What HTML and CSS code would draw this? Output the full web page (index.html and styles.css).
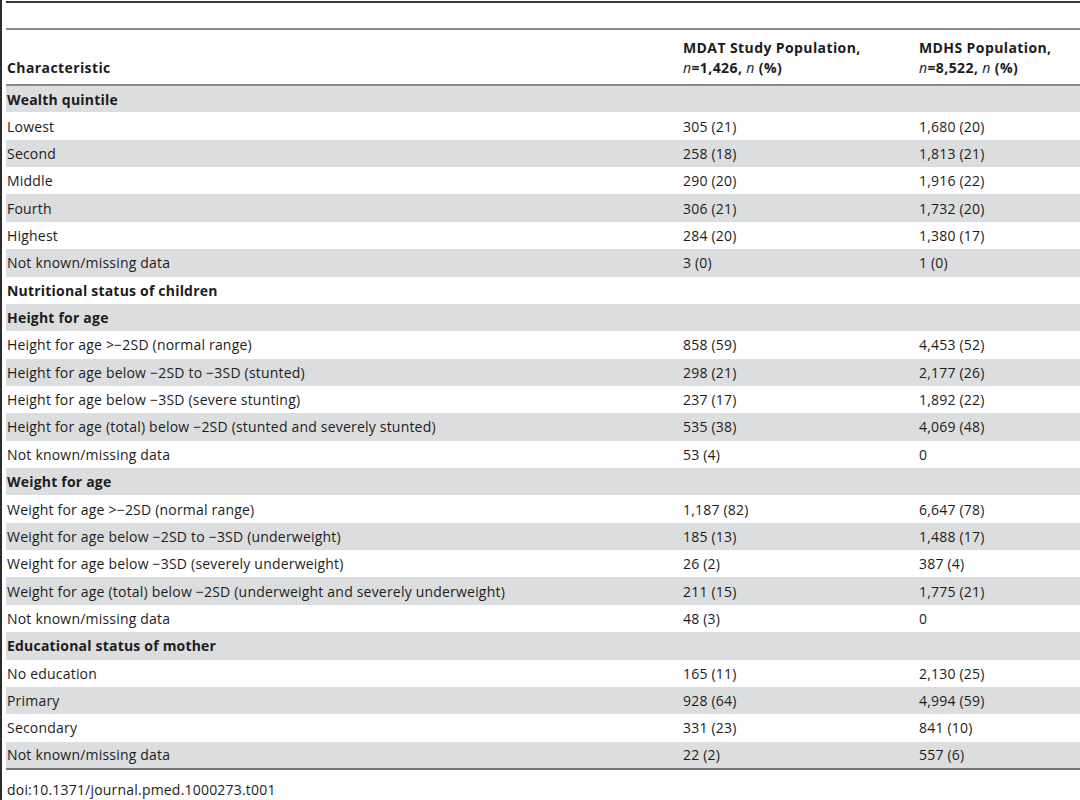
FILE: index.html
```html
<!DOCTYPE html>
<html lang="en">
<head>
  <meta charset="UTF-8" />
  <title>Table 1</title>
  <link rel="stylesheet" href="styles.css">
</head>
<body>

<div class="page">
  <table class="data">
    <colgroup>
      <col class="c1">
      <col class="c2">
      <col class="c3">
    </colgroup>
    <thead>
      <tr class="caption-row"><th colspan="3"></th></tr>
      <tr class="head">
        <th>Characteristic</th>
        <th>MDAT Study Population,<br><i>n</i>=1,426, <i>n</i> (%)</th>
        <th>MDHS Population,<br><i>n</i>=8,522, <i>n</i> (%)</th>
      </tr>
    </thead>
    <tbody>
      <tr class="group"><td>Wealth quintile</td><td></td><td></td></tr>
      <tr><td>Lowest</td><td>305 (21)</td><td>1,680 (20)</td></tr>
      <tr><td>Second</td><td>258 (18)</td><td>1,813 (21)</td></tr>
      <tr><td>Middle</td><td>290 (20)</td><td>1,916 (22)</td></tr>
      <tr><td>Fourth</td><td>306 (21)</td><td>1,732 (20)</td></tr>
      <tr><td>Highest</td><td>284 (20)</td><td>1,380 (17)</td></tr>
      <tr><td>Not known/missing data</td><td>3 (0)</td><td>1 (0)</td></tr>
      <tr class="group"><td>Nutritional status of children</td><td></td><td></td></tr>
      <tr class="group"><td>Height for age</td><td></td><td></td></tr>
      <tr><td>Height for age &gt;−2SD (normal range)</td><td>858 (59)</td><td>4,453 (52)</td></tr>
      <tr><td>Height for age below −2SD to −3SD (stunted)</td><td>298 (21)</td><td>2,177 (26)</td></tr>
      <tr><td>Height for age below −3SD (severe stunting)</td><td>237 (17)</td><td>1,892 (22)</td></tr>
      <tr><td>Height for age (total) below −2SD (stunted and severely stunted)</td><td>535 (38)</td><td>4,069 (48)</td></tr>
      <tr><td>Not known/missing data</td><td>53 (4)</td><td>0</td></tr>
      <tr class="group"><td>Weight for age</td><td></td><td></td></tr>
      <tr><td>Weight for age &gt;−2SD (normal range)</td><td>1,187 (82)</td><td>6,647 (78)</td></tr>
      <tr><td>Weight for age below −2SD to −3SD (underweight)</td><td>185 (13)</td><td>1,488 (17)</td></tr>
      <tr><td>Weight for age below −3SD (severely underweight)</td><td>26 (2)</td><td>387 (4)</td></tr>
      <tr><td>Weight for age (total) below −2SD (underweight and severely underweight)</td><td>211 (15)</td><td>1,775 (21)</td></tr>
      <tr><td>Not known/missing data</td><td>48 (3)</td><td>0</td></tr>
      <tr class="group"><td>Educational status of mother</td><td></td><td></td></tr>
      <tr><td>No education</td><td>165 (11)</td><td>2,130 (25)</td></tr>
      <tr><td>Primary</td><td>928 (64)</td><td>4,994 (59)</td></tr>
      <tr><td>Secondary</td><td>331 (23)</td><td>841 (10)</td></tr>
      <tr><td>Not known/missing data</td><td>22 (2)</td><td>557 (6)</td></tr>
    </tbody>
  </table>
  <div class="doi">doi:10.1371/journal.pmed.1000273.t001</div>
</div>

</body>
</html>
```

FILE: styles.css
```css
html, body {
  margin: 0;
  padding: 0;
  background: #fff;
}
body {
  font-family: 'Open Sans', 'Noto Sans', sans-serif;
  font-size: 14px;
  letter-spacing: 0.2px;
  color: #1c1c1c;
}
.page {
  border-left: 2px solid #2b2b2b;
  padding-left: 4px;
  padding-top: 1px;
  height: 799px;
}
.data {
  width: 100%;
  border-collapse: collapse;
  border-top: 2px solid #3a3a3a;
  border-bottom: 2px solid #777;
}
.c1 { width: 676px; }
.c2 { width: 236px; }
.data th,
.data td {
  padding: 0 1px;
  text-align: left;
  vertical-align: middle;
}
.caption-row th {
  height: 25px;
  border-bottom: 2px solid #8a8a8a;
}
.head th {
  font-weight: bold;
  letter-spacing: 0.4px;
  vertical-align: bottom;
  line-height: 20px;
  padding-bottom: 6px;
  padding-top: 8px;
  border-bottom: 2px solid #8a8a8a;
}
.head i {
  font-weight: normal;
  font-style: italic;
}
.data tbody tr {
  height: 27.36px;
}
.data tbody tr:nth-child(odd) {
  background: #dcdddf;
}
.group td {
  font-weight: bold;
}
.doi {
  margin-top: 10px;
  padding-left: 1px;
}
```
